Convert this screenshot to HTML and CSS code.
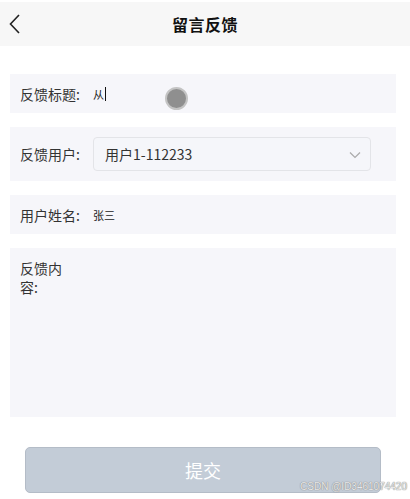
FILE: index.html
```html
<!DOCTYPE html>
<html lang="zh">
<head>
<meta charset="utf-8">
<link rel="stylesheet" href="styles.css">
</head>
<body>
<div class="page">
  <header class="topbar">
    <svg class="back" width="12" height="20" viewBox="0 0 12 20"><path d="M10 1 L1.5 10 L10 19" fill="none" stroke="#222" stroke-width="1.6"/></svg>
    <h1 class="title">留言反馈</h1>
  </header>
  <main class="form">
    <div class="row">
      <span class="label">反馈标题:</span>
      <span class="value">从<span class="caret"></span></span>
      <span class="touch"></span>
    </div>
    <div class="row row-select">
      <span class="label">反馈用户:</span>
      <div class="select">
        <span>用户1-112233</span>
        <svg width="12" height="8" viewBox="0 0 12 8"><path d="M1 1.5 L6 6.5 L11 1.5" fill="none" stroke="#aaa" stroke-width="1.2"/></svg>
      </div>
    </div>
    <div class="row">
      <span class="label">用户姓名:</span>
      <span class="value">张三</span>
    </div>
    <div class="row row-area">
      <span class="label label-area">反馈内容:</span>
    </div>
  </main>
  <div class="actions">
    <button class="submit">提交</button>
  </div>
  <span class="watermark">CSDN @ID3461074420</span>
</div>
</body>
</html>
```
FILE: styles.css
```css
* { box-sizing: border-box; }
html, body { margin: 0; padding: 0; background: #fff; }
body {
  font-family: "Noto Sans CJK SC", "Noto Sans", sans-serif;
  color: #333;
  width: 410px;
  height: 499px;
  overflow: hidden;
}
.page { position: relative; padding-top: 2px; height: 499px; }
.topbar {
  height: 44px;
  background: #f7f7f7;
  display: flex;
  align-items: center;
  justify-content: center;
  position: relative;
}
.back { position: absolute; left: 9px; top: 12px; }
.title {
  margin: 0;
  font-size: 16px;
  font-weight: 700;
  color: #111;
  letter-spacing: 0.5px;
}
.form {
  padding: 28px 14px 0 10px;
  display: flex;
  flex-direction: column;
  gap: 14px;
}
.row {
  position: relative;
  background: #f6f6fa;
  height: 39px;
  display: flex;
  align-items: center;
  padding-left: 10px;
}
.label {
  font-size: 14px;
  color: #333;
  width: 73px;
  flex: none;
}
.value {
  font-size: 11px;
  color: #222;
  display: flex;
  align-items: center;
}
.caret {
  display: inline-block;
  width: 1px;
  height: 14px;
  background: #111;
  margin-left: 1px;
}
.touch {
  position: absolute;
  left: 155px;
  top: 13px;
  width: 23px;
  height: 23px;
  border-radius: 50%;
  background: #8f8f8f;
  border: 2px solid #c4c4c4;
}
.row-select { height: 54px; }
.select {
  width: 278px;
  height: 34px;
  border: 1px solid #e3e4e8;
  border-radius: 4px;
  background: #f5f6fa;
  display: flex;
  align-items: center;
  justify-content: space-between;
  padding: 0 9px 0 11px;
  font-size: 14px;
  color: #333;
}
.select svg { margin-top: 1px; }
.row-area {
  height: 169px;
  align-items: flex-start;
  padding-top: 11px;
}
.label-area { width: 50px; line-height: 19px; }
.actions { padding: 30px 29px 0 25px; }
.submit {
  width: 356px;
  height: 46px;
  border: 1px solid #b4bcc7;
  border-radius: 5px;
  background: #c3ccd7;
  color: #fff;
  font-family: "Noto Sans CJK SC", sans-serif;
  font-size: 18px;
  padding: 0;
}
.watermark {
  position: absolute;
  right: 3px;
  bottom: 7px;
  font-family: "Liberation Sans", sans-serif;
  font-size: 10px;
  color: #e8e8e8;
  text-shadow: 0 0 1px #888, 0 0 1px #888;
}
```
